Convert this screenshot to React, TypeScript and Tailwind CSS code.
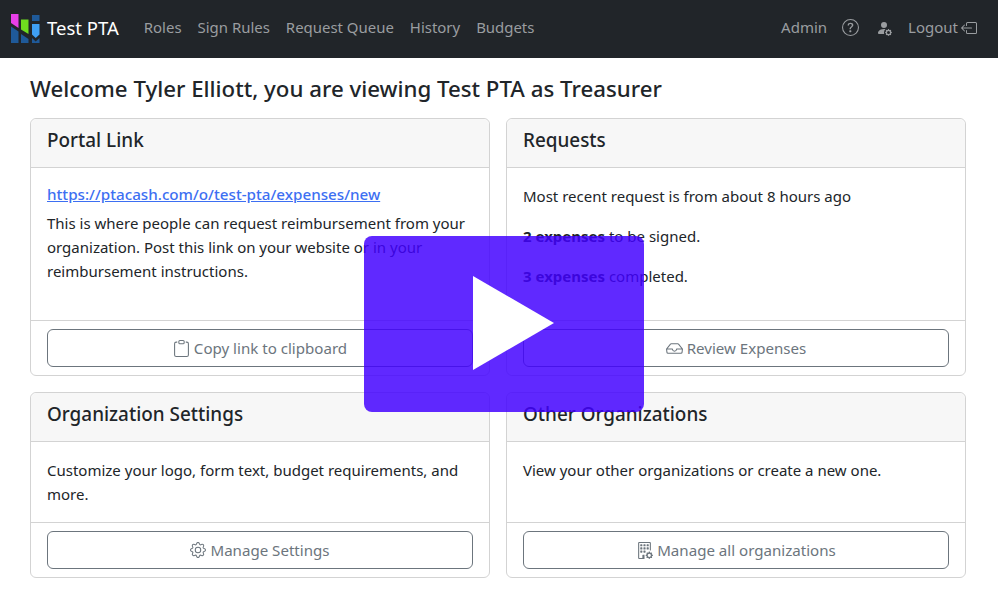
import React from "react";
import { BsBoxArrowLeft, BsBuildingGear, BsClipboard, BsGear, BsInbox, BsPersonFillGear, BsQuestionCircle } from "react-icons/bs";

const navLinks = ["Roles", "Sign Rules", "Request Queue", "History", "Budgets"];

function Logo() {
  return (
    <svg width="29" height="30" viewBox="0 0 29 30" className="shrink-0">
      <path d="M0 0H7.5V14L0 9Z" fill="#e83fe8" />
      <path d="M10 5.5H17.5V20L10 15.5Z" fill="#6fdc1e" />
      <path d="M21 1H28.5V7H21Z" fill="#1f5a99" />
      <path d="M21 10H28.5V20.5L24.7 24L21 20.5Z" fill="#3fa0f5" />
      <path d="M0 12.5L7.5 17.5V29H0Z" fill="#1f5a99" />
      <path d="M10 20L17.5 25V29H10Z" fill="#1f5a99" />
      <path d="M21 24L24.7 27.5L28.5 24V29H21Z" fill="#1f5a99" />
    </svg>
  );
}

function Card({ title, button, icon, children, bodyClass }: { title: string; button: string; icon: React.ReactNode; children: React.ReactNode; bodyClass: string }) {
  return (
    <div className="flex flex-col rounded-md border border-[#d3d3d3] bg-white">
      <div className="flex h-[49px] items-center rounded-t-md border-b border-[#d3d3d3] bg-[#f7f7f7] px-4 pb-[5px] text-[18.9px] font-medium text-[#212529]">
        {title}
      </div>
      <div className={`px-4 ${bodyClass}`}>{children}</div>
      <div className="border-t border-[#d3d3d3] px-4 py-2">
        <button className="flex h-[38px] w-full items-center justify-center gap-1 rounded-md border border-[#6c757d] text-[15.1px] text-[#6c757d]">
          {icon}
          {button}
        </button>
      </div>
    </div>
  );
}

export default function App() {
  return (
    <div className="relative h-[595px] w-[998px] overflow-hidden bg-white font-['Noto_Sans',sans-serif] text-[15px] text-[#212529]">
      <nav className="flex h-[58px] items-center justify-between bg-[#212529] pb-[3px] pl-[11px] pr-[21px]">
        <div className="flex items-center">
          <div className="mr-[25px] flex items-center gap-[7px]">
            <span className="mt-[3px]"><Logo /></span>
            <span className="text-[18.5px] text-white">Test PTA</span>
          </div>
          <div className="flex gap-4 text-[14.95px] text-[#9a9da0]">
            {navLinks.map((l) => (
              <span key={l}>{l}</span>
            ))}
          </div>
        </div>
        <div className="flex items-center text-[#9a9da0]">
          <span>Admin</span>
          <BsQuestionCircle className="ml-[15px] size-[17px]" />
          <BsPersonFillGear className="ml-[17px] size-4" />
          <span className="ml-4">Logout</span>
          <BsBoxArrowLeft className="ml-[3px] size-4" />
        </div>
      </nav>

      <main className="px-[30px]">
        <h1 className="flex h-[60px] items-center pt-px text-[22.25px] font-medium">Welcome Tyler Elliott, you are viewing Test PTA as Treasurer</h1>
        <div className="grid grid-cols-[460px_460px] gap-4">
          <Card title="Portal Link" button="Copy link to clipboard" icon={<BsClipboard className="size-[17px]" />} bodyClass="h-[152px] pt-[14px] leading-6">
            <a className="text-[15.2px] font-medium text-[#3d6ff2] underline">https://ptacash.com/o/test-pta/expenses/new</a>
            <p className="mt-[5px]">This is where people can request reimbursement from your organization. Post this link on your website or in your reimbursement instructions.</p>
          </Card>
          <Card title="Requests" button="Review Expenses" icon={<BsInbox className="size-[17px]" />} bodyClass="h-[152px] pt-[16px] leading-6">
            <p>Most recent request is from about 8 hours ago</p>
            <p className="mt-4"><b className="font-bold">2 expenses</b> to be signed.</p>
            <p className="mt-4"><b className="font-bold">3 expenses</b> completed.</p>
          </Card>
          <Card title="Organization Settings" button="Manage Settings" icon={<BsGear className="size-4" />} bodyClass="h-[80px] pt-[16px] leading-6">
            <p>Customize your logo, form text, budget requirements, and more.</p>
          </Card>
          <Card title="Other Organizations" button="Manage all organizations" icon={<BsBuildingGear className="size-[17px]" />} bodyClass="h-[80px] pt-[16px] leading-6">
            <p>View your other organizations or create a new one.</p>
          </Card>
        </div>
      </main>

      {/* video play overlay */}
      <div className="absolute left-[364px] top-[236px] flex h-[176px] w-[280px] items-center justify-center rounded-lg bg-[#4200ff]/[0.84]">
        <svg width="82" height="94" viewBox="0 0 82 94" className="mb-[2px] ml-[18px]">
          <path d="M1 0L82 47L1 94Z" fill="#fff" />
        </svg>
      </div>
    </div>
  );
}
